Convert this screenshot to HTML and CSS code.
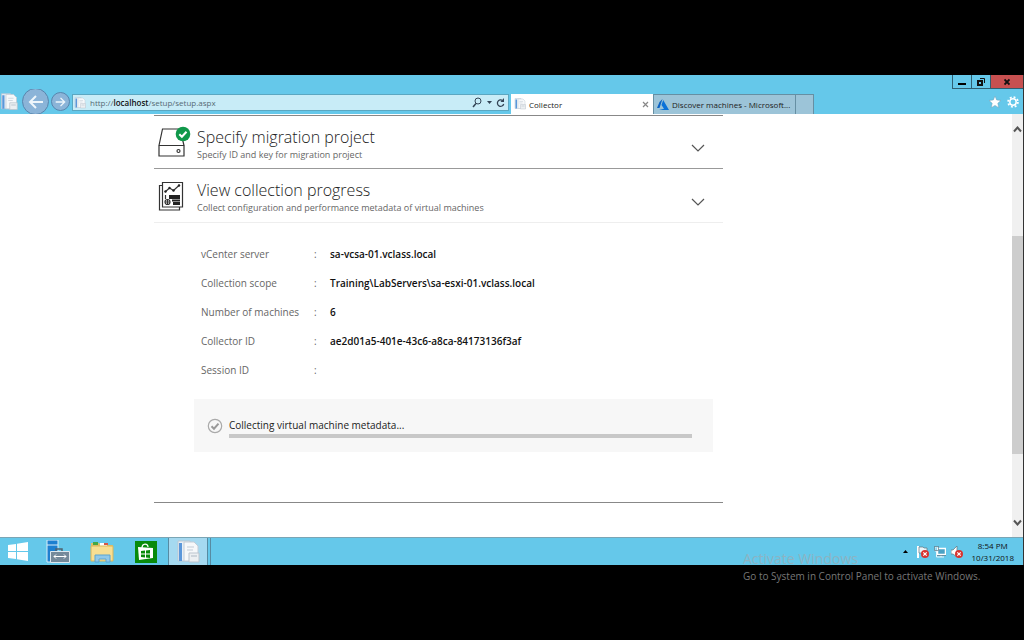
FILE: index.html
```html
<!DOCTYPE html>
<html lang="en">

<head>
	<meta charset="UTF-8">
	<title>Collector</title>
	<meta name="viewport" content="width=device-width, initial-scale=1.0">
	<link rel="stylesheet" href="styles.css">
</head>

<body>
	<svg class="symbols" aria-hidden="true">
		<symbol id="page" viewBox="0 0 24 24">
			<path d="M2 1h12v20H2z" fill="#e9eff5" stroke="#b9c7d4" />
			<path d="M3 3h3v18H3z" fill="#5b97da" />
			<path d="M8 2h10l4 4v15H8z" fill="#f6f8fa" stroke="#c3ccd6" />
			<path d="M11 7h7M11 10h6" stroke="#c3ccd6" />
			<path d="M13 13h10v9H13z" fill="#eceff2" stroke="#bcc5ce" />
			<path d="M15 16h6" stroke="#aeb9c4" />
		</symbol>
		<symbol id="chevron" viewBox="0 0 14 8">
			<path d="M1 1l6 6 6-6" fill="none" stroke="#555" stroke-width="1.2" />
		</symbol>
		<symbol id="blocked" viewBox="0 0 8 8">
			<circle cx="4" cy="4" r="4" fill="#d8332f" />
			<path d="M2.3 2.3l3.4 3.4M5.7 2.3L2.3 5.7" stroke="#fff" stroke-width="1.2" />
		</symbol>
	</svg>

	<div class="desktop">
		<header class="chrome">
			<div class="window-buttons">
				<button class="win" aria-label="Minimize"><svg width="8" height="8"><path d="M0 5h8v2H0z" /></svg></button>
				<button class="win" aria-label="Restore"><svg width="8" height="8" fill="none" stroke="#111"><path d="M3 .5h4.500V5" /><path d="M1 3h4v4H1z" stroke-width="2" /></svg></button>
				<button class="win win-close" aria-label="Close"><svg width="6" height="8"><path d="M.5 1.500l5 5M5.500 1.500l-5 5" stroke="#111" stroke-width="1.800" /></svg></button>
			</div>
			<div class="toolbar">
				<svg class="site-icon" width="18" height="18"><use href="#page" /></svg>
				<button class="nav nav-back" aria-label="Back"><svg width="16" height="14"><path d="M8 1L2 7l6 6M2 7h13" /></svg></button>
				<button class="nav" aria-label="Forward"><svg width="11" height="10" viewBox="0 0 16 14"><path d="M8 1l6 6-6 6M14 7H1" /></svg></button>
				<div class="address">
					<svg width="12" height="12"><use href="#page" /></svg>
					<div class="url">
						<input type="text" id="url">
						<label for="url">http://<b>localhost</b>/setup/setup.aspx</label>
					</div>
					<button aria-label="Search"><svg width="11" height="11" fill="none" stroke="#345"><circle cx="6" cy="4" r="3" /><path d="M4 6.500L1 10" stroke-width="1.500" /></svg></button>
					<button aria-label="Address list"><svg width="5" height="3"><path d="M0 0h5L2.500 3z" fill="#345" /></svg></button>
					<button aria-label="Refresh"><svg width="9" height="10" fill="none" stroke="#345"><path d="M6.500 2.500a3.200 3.200 0 1 0 1.200 3.500" stroke-width="1.300" /><path d="M8 0v4H4.500z" fill="#345" stroke="none" /></svg></button>
				</div>
				<nav class="tabs">
					<a class="tab tab-active" href="#"><svg width="12" height="12"><use href="#page" /></svg>Collector</a>
					<button class="tab-close" aria-label="Close tab"><svg width="7" height="7"><path d="M1 1l5 5M6 1L1 6" stroke="#888" stroke-width="1.200" /></svg></button>
					<a class="tab tab-other" href="#"><svg width="12" height="11"><path d="M5.500 0L2.500 3 0 9h2.500z" fill="#0b63c4" /><path d="M6.200 1L12 11H2l5-1.200L4.500 6z" fill="#0b72d8" /></svg>Discover machines - Microsoft...</a>
					<button class="tab-new" aria-label="New tab"></button>
				</nav>
				<div class="tools">
					<button aria-label="Favorites"><svg width="12" height="12"><path d="M6 0l1.700 4 4.300.4-3.200 2.900 1 4.400L6 9.400l-3.800 2.300 1-4.400L0 4.400 4.300 4z" fill="#fff" stroke="#6f9fb5" stroke-width=".5" /></svg></button>
					<button aria-label="Tools"><svg width="12" height="12" fill="none" stroke="#fff"><circle cx="6" cy="6" r="3.200" stroke-width="1.500" /><circle cx="6" cy="6" r="4.900" stroke-width="1.800" stroke-dasharray="1.900 1.950" /></svg></button>
				</div>
			</div>
		</header>

		<div class="viewport">
			<main class="panel">
				<button class="step">
					<svg class="step-icon" width="34" height="36" fill="none" stroke="#333" stroke-width="1.200">
						<path d="M1 21.500L4.500 5H22l4 16.500zM1 21.500h25V32H1z" />
						<circle cx="20.500" cy="27" r="1.500" />
						<circle cx="25" cy="10" r="7.300" fill="#10984a" stroke="none" />
						<path d="M21.300 10.200l2.600 2.600 4.600-5" stroke="#fff" stroke-width="2" />
					</svg>
					<span class="step-text">
						<span class="step-title">Specify migration project</span>
						<span class="step-desc">Specify ID and key for migration project</span>
					</span>
					<svg class="chevron" width="14" height="8"><use href="#chevron" /></svg>
				</button>
				<button class="step step-open" aria-expanded="true">
					<svg class="step-icon" width="34" height="36" fill="none" stroke="#333" stroke-width="1.200">
						<path d="M4.500 7.500H1.500v24.500h20v-3" />
						<path d="M4.500 4.500h20v24.500h-20z" fill="#fff" />
						<path d="M7 14l4.500-4 4 2.500 6-5.500" />
						<g fill="#222" stroke="none">
							<circle cx="7.500" cy="13.500" r="1.200" />
							<circle cx="11.500" cy="10" r="1.200" />
							<circle cx="15.500" cy="12.500" r="1.200" />
							<circle cx="21" cy="7.500" r="1.200" />
							<path d="M11 17h11v4H11zM14 21.500h8v2h-8zM15 24h7v3h-7z" />
						</g>
						<circle cx="9.500" cy="24" r="2.500" />
						<path d="M7.500 17v4M9.500 21.500v5M7 24h5" />
					</svg>
					<span class="step-text">
						<span class="step-title">View collection progress</span>
						<span class="step-desc">Collect configuration and performance metadata of virtual machines</span>
					</span>
					<svg class="chevron" width="14" height="8"><use href="#chevron" /></svg>
				</button>

				<table class="details">
					<tr><th scope="row">vCenter server</th><td>:</td><td>sa-vcsa-01.vclass.local</td></tr>
					<tr><th scope="row">Collection scope</th><td>:</td><td>Training\LabServers\sa-esxi-01.vclass.local</td></tr>
					<tr><th scope="row">Number of machines</th><td>:</td><td>6</td></tr>
					<tr><th scope="row">Collector ID</th><td>:</td><td>ae2d01a5-401e-43c6-a8ca-84173136f3af</td></tr>
					<tr><th scope="row">Session ID</th><td>:</td><td></td></tr>
				</table>

				<div class="status">
					<svg width="16" height="16" fill="none" stroke="#aaa"><circle cx="8" cy="8" r="6.700" stroke-width="1.200" /><path d="M4.500 8.200l2.500 2.500 4.500-5" stroke="#999" stroke-width="2" /></svg>
					<div class="status-body">
						<label for="progress">Collecting virtual machine metadata...</label>
						<progress id="progress" value="0" max="100"></progress>
					</div>
				</div>
			</main>
			<div class="scrollbar">
				<button aria-label="Scroll up"><svg width="9" height="7"><path d="M1 5.500l3.500-4 3.500 4" /></svg></button>
				<div class="track"><div class="thumb"></div></div>
				<button aria-label="Scroll down"><svg width="9" height="7"><path d="M1 1.500l3.500 4 3.500-4" /></svg></button>
			</div>
		</div>

		<footer class="taskbar">
			<button class="task" aria-label="Start"><svg width="20" height="19" fill="#fff"><path d="M0 3l8-1v7H0zM9 1.800L20 0v9H9zM0 10h8v7l-8-1zM9 10h11v9L9 17.200z" /></svg></button>
			<button class="task" aria-label="Server Manager"><svg width="24" height="23"><path d="M1 0h11v22H1z" fill="#1d7fd0" stroke="#d9edf8" /><path d="M1 5h11" stroke="#d9edf8" /><path d="M10 11V9h6v2" fill="none" stroke="#4d6370" stroke-width="1.500" /><path d="M4.500 11.500h19v11h-19z" fill="#74899a" stroke="#dde8ef" /><path d="M8 16.500h12M10 14.500l-2 2 2 2M18 14.500l2 2-2 2" fill="none" stroke="#fff" /></svg></button>
			<button class="task" aria-label="File Explorer"><svg width="24" height="22"><path d="M1 2h8l2 2h12v16H1z" fill="#e3bf64" /><path d="M3 1h5v3H3z" fill="#44a845" /><path d="M10 2h7v3h-7z" fill="#fff" /><path d="M14 2h4v2h-4z" fill="#d75745" /><path d="M1 5h22v15H1z" fill="#f8df92" stroke="#d8b65c" /><path d="M5 21v-7h15v7h-4v-3H9v3z" fill="#91c9e9" stroke="#5ca5d0" /></svg></button>
			<button class="task" aria-label="Store"><svg width="22" height="22"><path d="M0 0h22v22H0z" fill="#088a0b" /><path d="M7 7c0-5 6-5 6-1" fill="none" stroke="#fff" stroke-width="1.300" /><path d="M3 6l15 1v10L4 19z" fill="#fff" /><path d="M6 10l4-.5v3H6zM11 9.400l4-.4v3.500h-4zM6 13.500h4v3l-4-.5zM11 13.500h4V17l-4-.4z" fill="#088a0b" /></svg></button>
			<button class="task task-active" aria-label="Collector"><svg width="24" height="24"><use href="#page" /></svg></button>
			<div class="tray">
				<svg class="tray-more" width="5" height="3"><path d="M0 3h5L2.500 0z" /></svg>
				<svg width="12" height="12"><path d="M1 0v12" stroke="#fff" stroke-width="2" /><path d="M2 1h4l1 1h3v5H2z" fill="#e9f5fa" stroke="#63737c" stroke-width=".7" /><use href="#blocked" x="4" y="4" width="8" height="8" /></svg>
				<svg width="12" height="12" fill="none"><path d="M3.500 2.500h8v6h-8z" fill="#4ba2c5" stroke="#fff" stroke-width="1.500" /><path d="M1 1h3v4H1zM2.500 5v6H10M7 9v2" stroke="#e8f4f9" /><path d="M.5 .5h4v4h-4zM3 9.500h9" stroke="#4d6370" stroke-width=".6" /></svg>
				<svg width="12" height="12"><path d="M0 4h2l4-4v11L2 8H0z" fill="#fff" stroke="#63737c" stroke-width=".7" /><use href="#blocked" x="4" y="4" width="8" height="8" /></svg>
				<div class="clock">
					<div>8:54 PM</div>
					<div>10/31/2018</div>
				</div>
			</div>
		</footer>
	</div>

	<div class="watermark">
		<div class="watermark-title">Activate Windows</div>
		<div class="watermark-text">Go to System in Control Panel to activate Windows.</div>
	</div>
</body>

</html>
```
FILE: styles.css
```css
* {
	box-sizing: border-box;
}

body {
	margin: 0;
	padding: 75px 0;
	min-height: 100vh;
	display: flex;
	position: relative;
	background: #000;
	color: #222;
	font-family: "Open Sans", "Noto Sans", sans-serif;
	font-size: 10px;
}

button {
	margin: 0;
	padding: 0;
	border: 0 none;
	background: none;
	color: inherit;
	font: inherit;
	display: flex;
	align-items: center;
	justify-content: center;
}

svg {
	flex: none;
	display: block;
}

.symbols {
	position: absolute;
	width: 0;
	height: 0;
}

.desktop {
	flex: 1;
	min-width: 0;
	display: flex;
	flex-direction: column;
	border-right: 1px solid #333;
	background: #fff;
}

/* browser window */
.chrome {
	background: #65c8ea;
}

.window-buttons {
	display: flex;
	justify-content: flex-end;
	height: 14px;
}

.win {
	width: 19px;
	border: 1px solid #2f5f72;
	border-width: 0 0 1px 1px;
}

.win-close {
	width: 33px;
	background: #c75050;
}

.toolbar {
	display: flex;
	align-items: center;
	height: 25px;
	overflow: hidden;
}

.nav {
	flex: none;
	width: 19px;
	height: 19px;
	border: 1px solid #5885ad;
	border-radius: 50%;
	background: #8bb4d8;
	fill: none;
	stroke: #eef6fb;
	stroke-width: 2;
}

.nav-back {
	width: 27px;
	height: 27px;
	margin: 0 2px 0 4px;
}

.address {
	flex: 1;
	display: flex;
	align-items: center;
	gap: 4px;
	height: 17px;
	margin: 2px 2px 0 2px;
	padding: 0 3px 0 1px;
	border: 1px solid #5ba7c1;
	background: #c8ecf7;
}

.url {
	position: relative;
	flex: 1;
	color: #566b75;
	font-size: 8px;
	line-height: 15px;
}

.url b {
	color: #111;
	font-weight: 600;
}

.url input {
	position: absolute;
	inset: 0;
	width: 100%;
	border: 0 none;
	background: transparent;
}

.url label {
	position: relative;
	pointer-events: none;
}

.tabs {
	flex: none;
	display: flex;
	align-self: flex-end;
	width: 303px;
	height: 20px;
	font-size: 8px;
}

.tab {
	display: flex;
	align-items: center;
	gap: 3px;
	padding-left: 3px;
	color: #222;
	text-decoration: none;
	white-space: nowrap;
}

.tab-active {
	flex: 1;
	background: #fff;
}

.tab-close {
	width: 15px;
	background: #fff;
}

.tab-other {
	width: 143px;
	border: 1px solid #668fa3;
	border-bottom: 0 none;
	background: #9cc4d8;
}

.tab-new {
	width: 18px;
	border: 1px solid #668fa3;
	border-width: 1px 1px 0 0;
	background: #9cc4d8;
}

.tools {
	flex: none;
	display: flex;
	gap: 6px;
	width: 209px;
	padding-right: 4px;
	justify-content: flex-end;
}

/* page */
.viewport {
	flex: 1;
	display: flex;
	justify-content: space-between;
}

.panel {
	flex: 1;
	max-width: 569px;
	margin: 1px 0 34px 154px;
	border: 1px solid #888;
	border-width: 1px 0;
}

.step {
	width: 100%;
	height: 53px;
	padding: 0 18px 0 4px;
	border-bottom: 1px solid #999;
	text-align: left;
}

.step-open {
	height: 54px;
	border-color: #eee;
}

.step-icon {
	margin: 0 5px 0 0;
}

.step-text {
	flex: 1;
	padding-top: 1px;
}

.step-title,
.step-desc {
	display: block;
}

.step-title {
	color: #222;
	font-size: 16px;
	font-weight: 300;
	line-height: 24px;
}

.step-desc {
	color: #666;
	font-size: 9px;
	line-height: 12px;
}

.chevron {
	margin-top: 12px;
}

.details {
	margin: 16px 0 15px 47px;
	border-collapse: collapse;
	font-size: 10px;
}

.details th,
.details td {
	height: 29px;
	padding: 0;
	color: #666;
	font-weight: 400;
	text-align: left;
	white-space: nowrap;
}

.details th {
	width: 113px;
}

.details td {
	width: 16px;
}

.details td:last-child {
	color: #111;
	font-weight: 600;
}

.status {
	display: flex;
	align-items: center;
	gap: 6px;
	height: 53px;
	margin: 0 10px 0 40px;
	padding: 0 21px 0 13px;
	background: #f7f7f7;
}

.status-body {
	flex: 1;
	padding-top: 2px;
}

.status label {
	display: block;
	font-size: 10px;
	line-height: 18px;
}

progress {
	display: block;
	width: 100%;
	height: 4px;
	border: 0 none;
	appearance: none;
	background: #c8c8c8;
}

progress::-webkit-progress-bar {
	background: #c8c8c8;
}

.scrollbar {
	display: flex;
	flex-direction: column;
	width: 11px;
	background: #f0f0f0;
	fill: none;
	stroke: #555;
	stroke-width: 2;
}

.scrollbar button {
	height: 30px;
}

.track {
	flex: 1;
	display: flex;
	flex-direction: column;
	justify-content: center;
	padding-top: 39px;
}

.thumb {
	height: 67%;
	background: #cdcdcd;
}

/* taskbar */
.taskbar {
	display: flex;
	height: 28px;
	border-top: 1px solid #7aa5b5;
	background: #65c8ea;
}

.task {
	width: 44px;
}

.task:first-child {
	width: 36px;
}

.task-active {
	width: 40px;
	border: 1px solid #578ba2;
	border-width: 0 1px;
	background: #a5d9f0;
	box-shadow: 2px 0 #65c8ea, 3px 0 #578ba2;
}

.tray {
	display: flex;
	align-items: center;
	gap: 5px;
	margin-left: auto;
	padding-right: 9px;
}

.tray-more {
	margin-right: 4px;
}

.clock {
	margin-left: 4px;
	color: #111;
	font-size: 8px;
	line-height: 12px;
	text-align: center;
}

.watermark {
	position: absolute;
	left: 743px;
	top: 549px;
	white-space: nowrap;
	pointer-events: none;
}

.watermark-title {
	height: 17px;
	color: #8db3c2;
	font-size: 14px;
	line-height: 20px;
}

.watermark-text {
	color: #777;
	font-size: 10px;
	line-height: 20px;
}
```
